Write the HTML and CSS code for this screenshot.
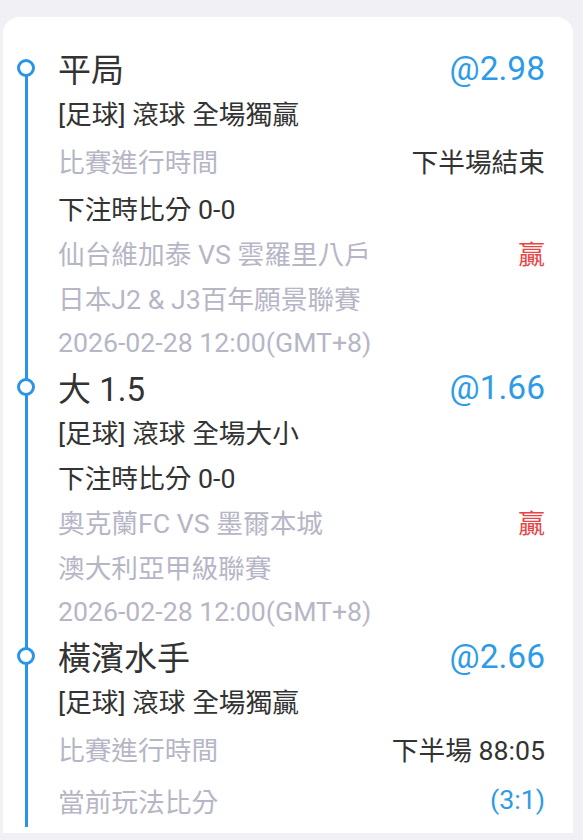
FILE: index.html
```html
<!DOCTYPE html>
<html lang="zh-Hant">
<head>
<meta charset="utf-8">
<link rel="stylesheet" href="styles.css">
</head>
<body>
<div class="card">
  <section class="item first">
    <div class="row title">
      <span class="dot"></span>
      <span class="name">平局</span>
      <span class="odds">@2.98</span>
    </div>
    <div class="row dark">[足球] 滾球 全場獨贏</div>
    <div class="row kv">
      <span class="muted">比賽進行時間</span>
      <span class="dark">下半場結束</span>
    </div>
    <div class="row dark">下注時比分 0-0</div>
    <div class="row">
      <span class="muted">仙台維加泰 VS 雲羅里八戶</span>
      <span class="win">贏</span>
    </div>
    <div class="row muted">日本J2 &amp; J3百年願景聯賽</div>
    <div class="row muted">2026-02-28 12:00(GMT+8)</div>
  </section>

  <section class="item">
    <div class="row title">
      <span class="dot"></span>
      <span class="name">大 1.5</span>
      <span class="odds">@1.66</span>
    </div>
    <div class="row dark">[足球] 滾球 全場大小</div>
    <div class="row dark">下注時比分 0-0</div>
    <div class="row">
      <span class="muted">奧克蘭FC VS 墨爾本城</span>
      <span class="win">贏</span>
    </div>
    <div class="row muted">澳大利亞甲級聯賽</div>
    <div class="row muted">2026-02-28 12:00(GMT+8)</div>
  </section>

  <section class="item last">
    <div class="row title">
      <span class="dot"></span>
      <span class="name">橫濱水手</span>
      <span class="odds">@2.66</span>
    </div>
    <div class="row dark">[足球] 滾球 全場獨贏</div>
    <div class="row kv">
      <span class="muted">比賽進行時間</span>
      <span class="dark">下半場 88:05</span>
    </div>
    <div class="row kv2">
      <span class="muted">當前玩法比分</span>
      <span class="score">(3:1)</span>
    </div>
  </section>
</div>
</body>
</html>
```

FILE: styles.css
```css
html, body {
  margin: 0;
  padding: 0;
}

body {
  background: #f0f0f5;
  font-family: Roboto, "Noto Sans CJK TC", sans-serif;
  font-size: 26.7px;
  color: #333333;
  height: 840px;
  overflow: hidden;
}

.card {
  margin: 17px 10px 0 3px;
  padding-top: 29px;
  padding-bottom: 6px;
  background: #ffffff;
  border-radius: 16px 16px 0 0;
}

.item {
  padding-left: 55px;
  padding-right: 28px;
  background-image: linear-gradient(#2a95e6, #2a95e6);
  background-repeat: no-repeat;
  background-size: 3px 100%;
  background-position: 22px 0;
}

.item.first {
  background-size: 3px calc(100% - 22px);
  background-position: 22px 100%;
}

.row {
  height: 45px;
  display: flex;
  align-items: center;
  justify-content: space-between;
  white-space: nowrap;
}

.row.title {
  height: 44px;
  justify-content: flex-start;
}

.row.kv {
  height: 50px;
}

.row.kv2 {
  height: 54px;
}

.dot {
  width: 18px;
  height: 18px;
  box-sizing: border-box;
  border: 3.5px solid #2a95e6;
  border-radius: 50%;
  background: #ffffff;
  margin-left: -41px;
  margin-right: 23px;
  flex: none;
}

.name {
  font-size: 33px;
  color: #333333;
}

.odds {
  margin-left: auto;
  font-size: 33.5px;
  color: #2e9be6;
}

.dark {
  color: #333333;
}

.muted {
  color: #b6b6c6;
}

.win {
  color: #e64545;
}

.score {
  color: #2e9be6;
}
```
